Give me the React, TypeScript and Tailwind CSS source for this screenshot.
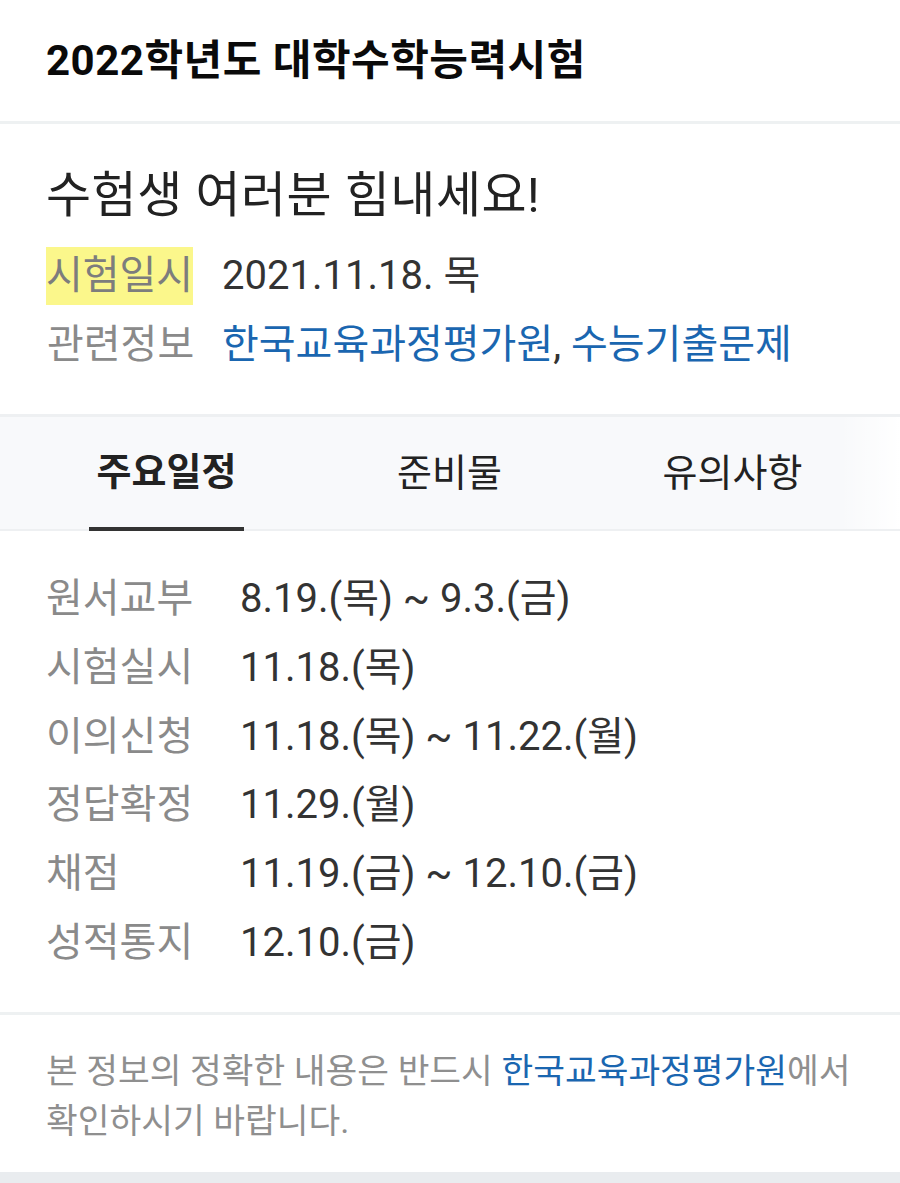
const font = { fontFamily: 'Roboto, "Noto Sans CJK KR", sans-serif' };

const schedule = [
  { label: '원서교부', value: '8.19.(목) ~ 9.3.(금)' },
  { label: '시험실시', value: '11.18.(목)' },
  { label: '이의신청', value: '11.18.(목) ~ 11.22.(월)' },
  { label: '정답확정', value: '11.29.(월)' },
  { label: '채점', value: '11.19.(금) ~ 12.10.(금)' },
  { label: '성적통지', value: '12.10.(금)' },
];

const tabs = ['주요일정', '준비물', '유의사항'];

export default function App() {
  return (
    <div className="w-[900px] h-[1183px] bg-[#e9ecef] overflow-hidden" style={font}>
      <div className="bg-white">
        {/* title */}
        <header className="h-[121px] flex items-center px-[46px]">
          <h1 className="text-[42px] font-bold tracking-[0.5px] text-[#0a0a0a] whitespace-nowrap">2022학년도 대학수학능력시험</h1>
        </header>
        <div className="h-[3px] bg-[#eef1f2]" />

        {/* summary */}
        <section className="h-[290px] px-[46px] pt-[42px]">
          <h2 className="text-[49px] leading-[60px] text-[#222] tracking-[0.5px] whitespace-nowrap">수험생 여러분 힘내세요!</h2>
          <dl className="mt-[20px] flex flex-col gap-[10px] text-[40px] whitespace-nowrap">
            <div className="flex items-center">
              <dt className="shrink-0 bg-[#fbf78b] h-[58px] w-[147px] flex items-center justify-center text-[#7d7d7d]">시험일시</dt>
              <dd className="ml-[29px] text-[#333]">2021.11.18. 목</dd>
            </div>
            <div className="flex items-center h-[58px]">
              <dt className="shrink-0 w-[147px] pl-[1px] text-[#8a8a8a]">관련정보</dt>
              <dd className="ml-[29px] text-[#333]">
                <a className="text-[#1a66b0]">한국교육과정평가원</a>, <a className="text-[#1a66b0]">수능기출문제</a>
              </dd>
            </div>
          </dl>
        </section>

        {/* tabs */}
        <nav className="relative h-[117px] bg-[#f8f9fb] border-t-[3px] border-b-[2px] border-[#eef0f2] flex px-[25px]">
          {tabs.map((t, i) => (
            <div key={t} className="w-[283px] flex justify-center">
              <div
                className={
                  i === 0
                    ? 'flex items-center px-[8px] text-[38px] font-bold text-[#222] border-b-[4px] border-[#333] -mb-[2px]'
                    : 'flex items-center text-[38px] text-[#222]'
                }
              >
                {t}
              </div>
            </div>
          ))}
          <div className="absolute right-0 top-0 bottom-0 w-[60px] bg-gradient-to-r from-[#f8f9fb00] to-white" />
        </nav>

        {/* schedule */}
        <section className="h-[481px] px-[46px] pt-[34px]">
          {schedule.map((row) => (
            <div key={row.label} className="flex items-center h-[68.7px] text-[40px] whitespace-nowrap">
              <span className="shrink-0 w-[194px] text-[#8a8a8a]">{row.label}</span>
              <span className="text-[#333]">{row.value}</span>
            </div>
          ))}
        </section>
        <div className="h-[3px] bg-[#eef1f2]" />

        {/* notice */}
        <footer className="h-[157px] px-[46px] pt-[31px] text-[34.5px] leading-[50px] text-[#8f8f8f] whitespace-nowrap">
          본 정보의 정확한 내용은 반드시 <a className="text-[#1a66b0]">한국교육과정평가원</a>에서
          <br />
          확인하시기 바랍니다.
        </footer>
      </div>
    </div>
  );
}
